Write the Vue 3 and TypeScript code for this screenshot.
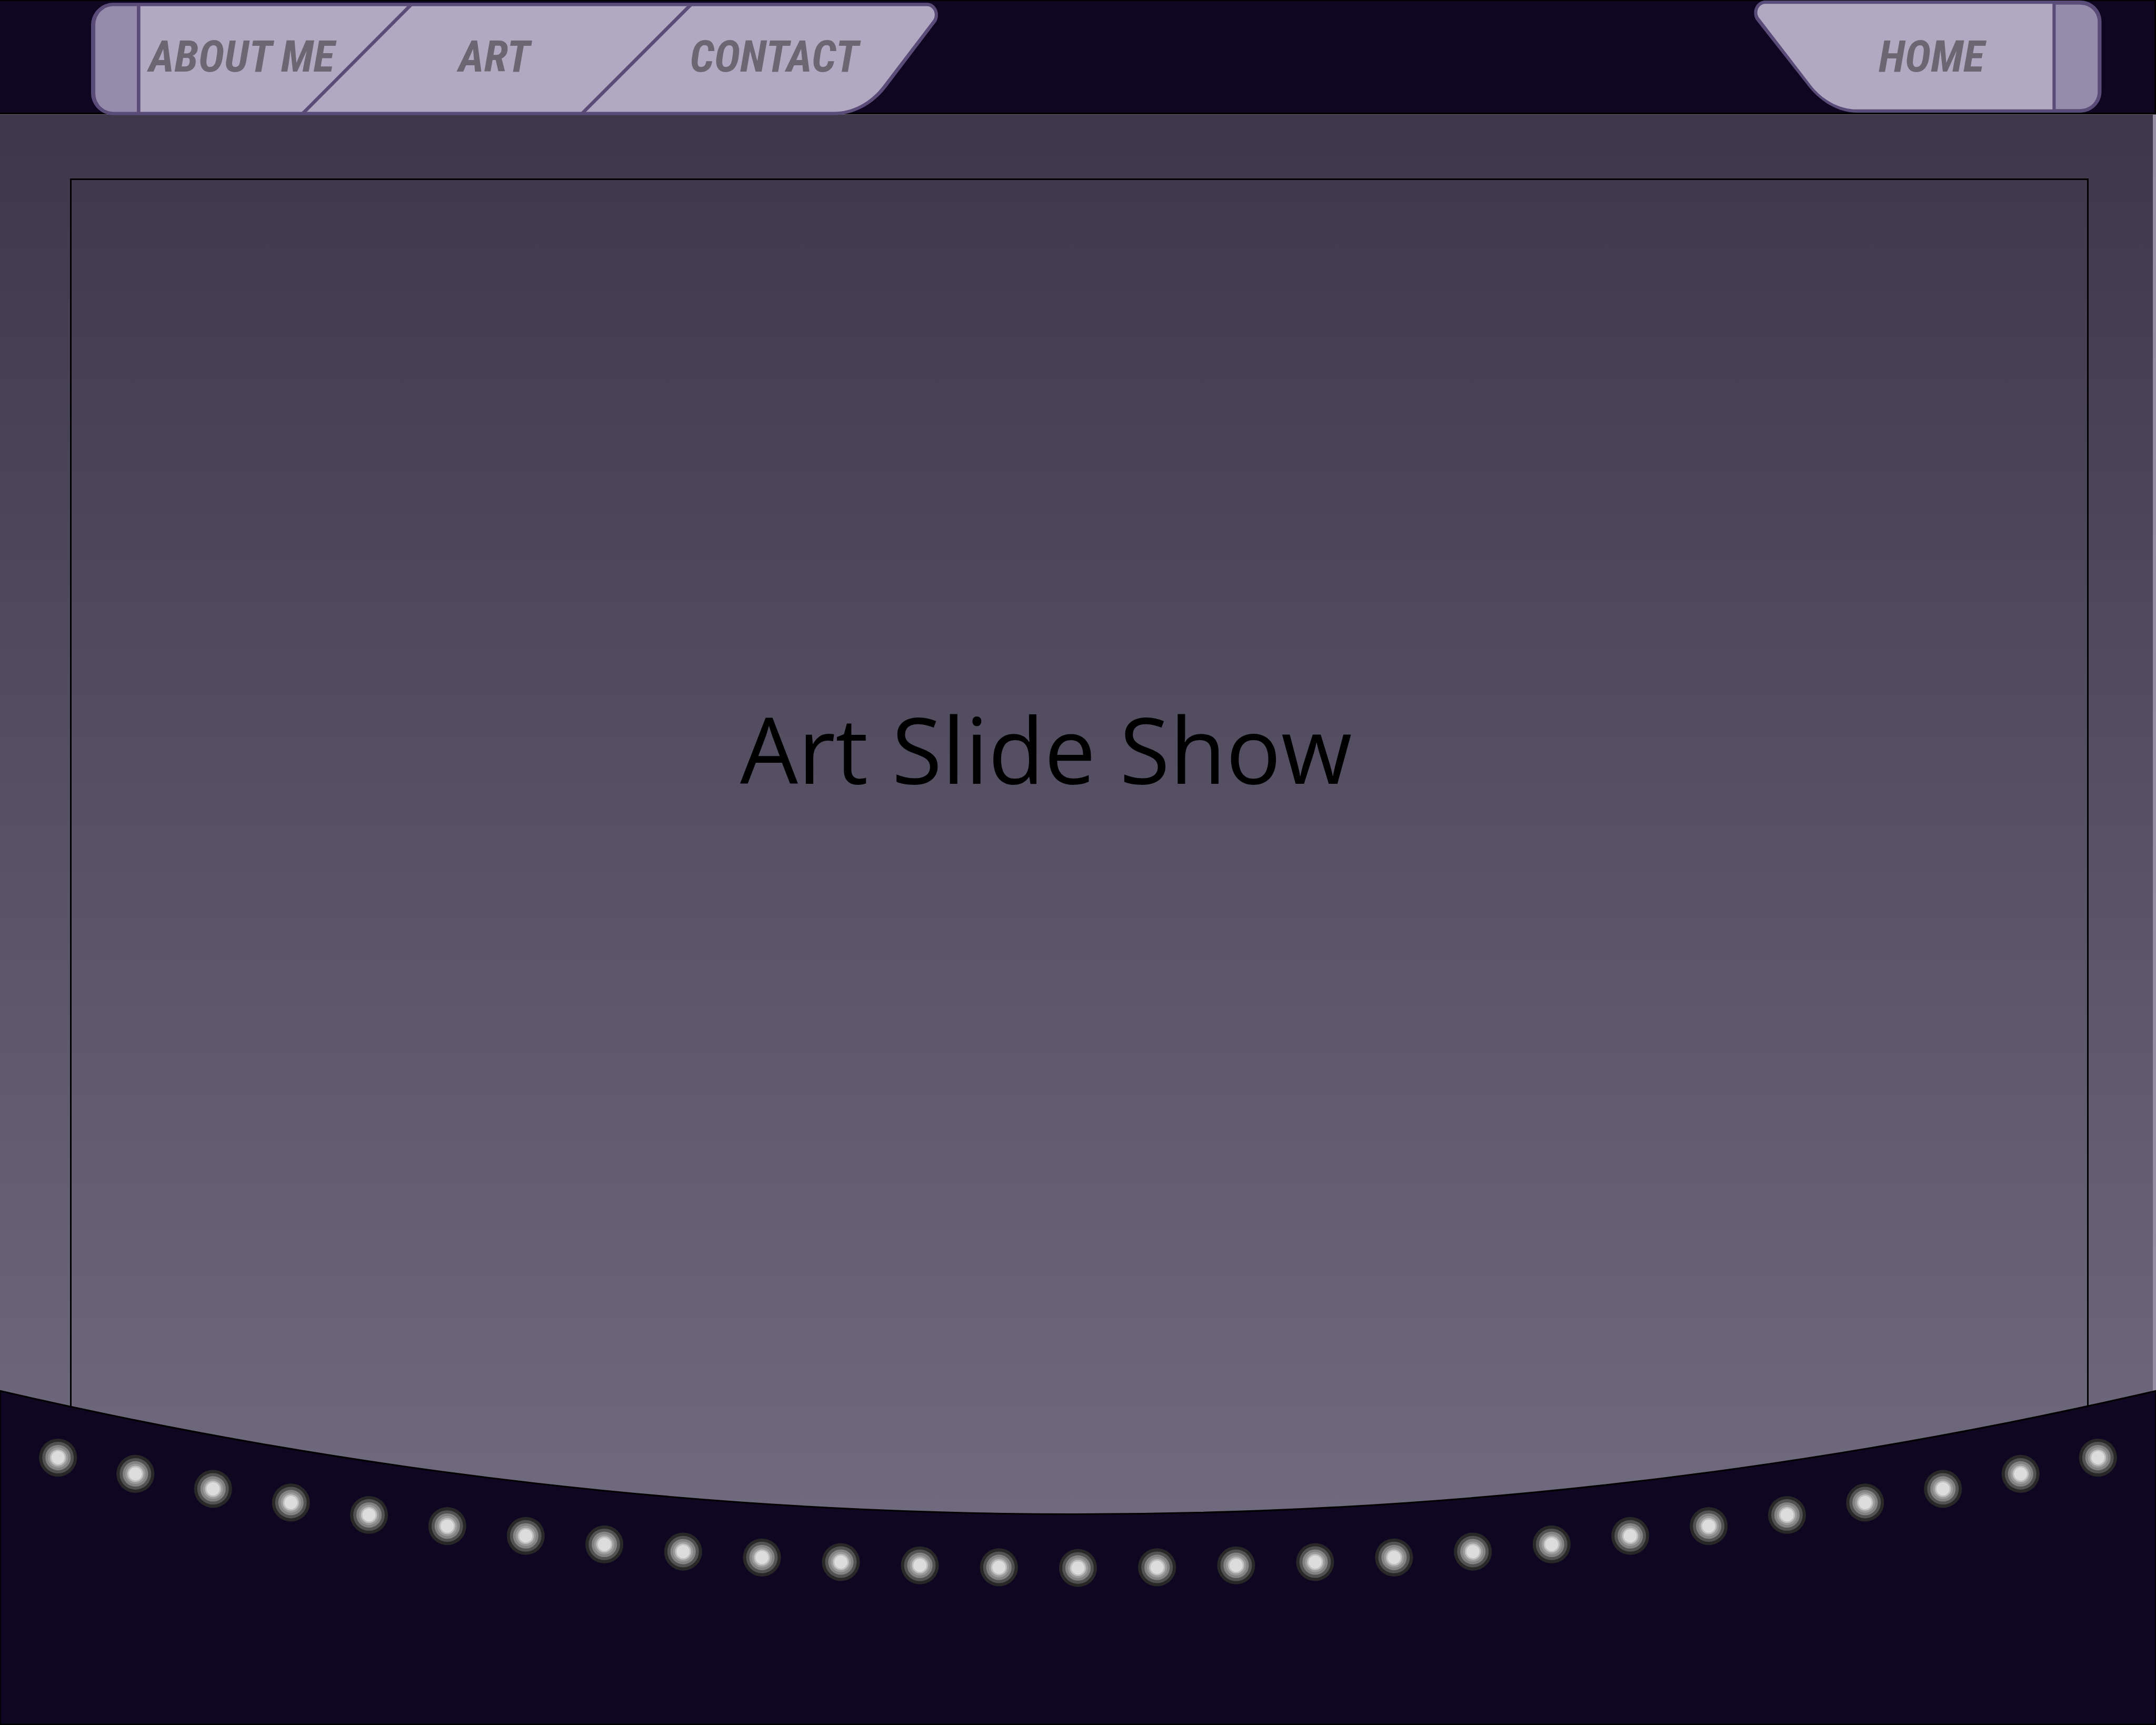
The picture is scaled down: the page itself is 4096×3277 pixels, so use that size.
<script setup lang="ts">
interface Bulb {
  x: number
  y: number
}

// Bulbs hang on a circular arc, evenly spaced by angle around its centre.
const BULBS_PER_SIDE = 13
const ARC_RADIUS = 11795
const ARC_CENTRE_X = 2666.5
const ARC_LOWEST_Y = 3879
const STEP = Math.asin(2523 / ARC_RADIUS) / BULBS_PER_SIDE

const bulbs: Bulb[] = Array.from({ length: BULBS_PER_SIDE * 2 + 1 }, (_, i) => {
  const angle = (i - BULBS_PER_SIDE) * STEP
  return {
    x: ARC_CENTRE_X + ARC_RADIUS * Math.sin(angle),
    y: ARC_LOWEST_Y - ARC_RADIUS * (1 - Math.cos(angle)),
  }
})

const rings = [
  { r: 47, fill: '#282828' },
  { r: 39, fill: '#525252' },
  { r: 31.4, fill: '#838383' },
  { r: 25, fill: '#9b9b9b' },
  { r: 20, fill: '#c0c0c0' },
  { r: 16.2, fill: '#dcdcdc' },
]
</script>

<template>
  <div class="page">
    <header class="bar">
      <nav class="tabs tabs-main" aria-label="Sections">
        <svg class="plate" viewBox="225 6.5 2095 278.2" aria-hidden="true">
          <path
            class="edge"
            d="M280 6.5H2293C2308 6.5 2320 20 2320 37Q2320 46 2315.8 53L2191.8 216.7C2159 259.5 2110 284.7 2063 284.7H280C250 284.7 225 260 225 230V62C225 31 250 6.5 280 6.5Z"
          />
          <path
            class="face"
            d="M340 15H2293C2304 15 2312 25 2312 37Q2312 43 2309 48L2184 212C2152 254 2108 276.4 2063 276.4H340Z"
          />
          <path
            class="cap"
            d="M280 15H338.5V276.4H280C255 276.4 235.5 256 235.5 230V62C235.5 36 255 15 280 15Z"
          />
          <path class="divider" d="M342.8 11V280M1017 11L749 280M1709 11L1440 280" />
        </svg>
        <a href="#about" class="tab">ABOUT ME</a>
        <a href="#art" class="tab">ART</a>
        <a href="#contact" class="tab">CONTACT</a>
      </nav>
      <nav class="tabs tabs-home" aria-label="Home">
        <svg class="plate" viewBox="4338 1 860.5 277.7" aria-hidden="true">
          <path
            class="edge"
            d="M4366 1H5145C5175 1 5198.5 24 5198.5 53V227C5198.5 255 5175 278.7 5146 278.7H4593C4545 278.7 4499 250 4468 208L4343.5 50Q4338 42 4338 31.5C4338 14 4351 1 4366 1Z"
          />
          <path
            class="face"
            d="M4366 9H5077V270.7H4593C4548 270.7 4506 247 4476.5 208L4350.5 44Q4346 38 4346 31C4346 18 4355 9 4366 9Z"
          />
          <path
            class="cap"
            d="M5085 11H5145C5170 11 5189 30 5189 53V227C5189 251 5170 270 5145 270H5085Z"
          />
        </svg>
        <a href="#home" class="tab">HOME</a>
      </nav>
    </header>

    <main class="stage">
      <section class="frame">
        <h1 class="title">Art Slide Show</h1>
      </section>
    </main>

    <footer class="lights">
      <svg class="curtain" viewBox="0 3438 5333 829" aria-hidden="true">
        <path
          class="drape"
          d="M0 3441A11813 11813 0 0 0 5333 3441V4266H0Z"
        />
        <g v-for="(bulb, i) in bulbs" :key="i">
          <circle
            v-for="ring in rings"
            :key="ring.r"
            :cx="bulb.x"
            :cy="bulb.y"
            :r="ring.r"
            :fill="ring.fill"
          />
        </g>
      </svg>
    </footer>
  </div>
</template>

<style>
body {
  margin: 0;
  background: #0f0622;
}
</style>

<style scoped>
.page {
  display: flex;
  flex-direction: column;
  min-height: 100vh;
}

.bar {
  position: relative;
  z-index: 1;
  display: flex;
  justify-content: space-between;
  align-items: flex-start;
  box-sizing: border-box;
  height: 217px;
  padding: 0 100px 0 173px;
  border: solid #000;
  border-width: 2px 3px 3px 0;
  background: #0f0622;
  box-shadow: 0 1px #5f5c64;
}

.tabs {
  position: relative;
  display: grid;
}

.tabs-main {
  grid-template-columns: 95px 382px 578px 486px 68px;
  grid-template-rows: 214px;
  margin-top: 3px;
}

.tabs-home {
  grid-template-columns: 98px 479px 84px;
  grid-template-rows: 213px;
  margin-top: -1px;
}

.plate {
  grid-area: 1 / 1 / 2 / -1;
  width: 100%;
  height: 100%;
}

.edge {
  fill: #5a4c78;
}

.face {
  fill: #b1a9c2;
}

.cap {
  fill: #958cab;
}

.divider {
  fill: none;
  stroke: #5a4c78;
  stroke-width: 8.4;
}

.tab {
  grid-row: 1;
  z-index: 1;
  display: flex;
  align-items: center;
  justify-content: center;
  color: #6b6672;
  font: italic bold 84px/100px "Roboto Condensed", "Liberation Sans Narrow", "DejaVu Sans Condensed", sans-serif;
  text-decoration: none;
  white-space: nowrap;
}

.tabs-main .tab {
  padding-bottom: 8px;
}

.tab:nth-of-type(1) {
  grid-column: 2;
}

.tab:nth-of-type(2) {
  grid-column: 3;
}

.tab:nth-of-type(3) {
  grid-column: 4;
}

.stage {
  display: flex;
  flex: 1;
  padding: 122px 122px 0 133px;
  border-right: 6px solid #958fa2;
  background: linear-gradient(#3d3749, #706a7f);
}

.frame {
  flex: 1;
  padding: 962px 0 0 1270px;
  border: 3px solid #000;
  border-bottom: 0;
}

.title {
  margin: 0;
  color: #000;
  font: 400 174px/236px "Open Sans", "Noto Sans", sans-serif;
  white-space: nowrap;
}

.lights {
  position: relative;
  margin-top: -240px;
}

.curtain {
  display: block;
  width: 100%;
  height: auto;
}

.drape {
  fill: #0f0622;
  stroke: #000;
  stroke-width: 4;
}
</style>
